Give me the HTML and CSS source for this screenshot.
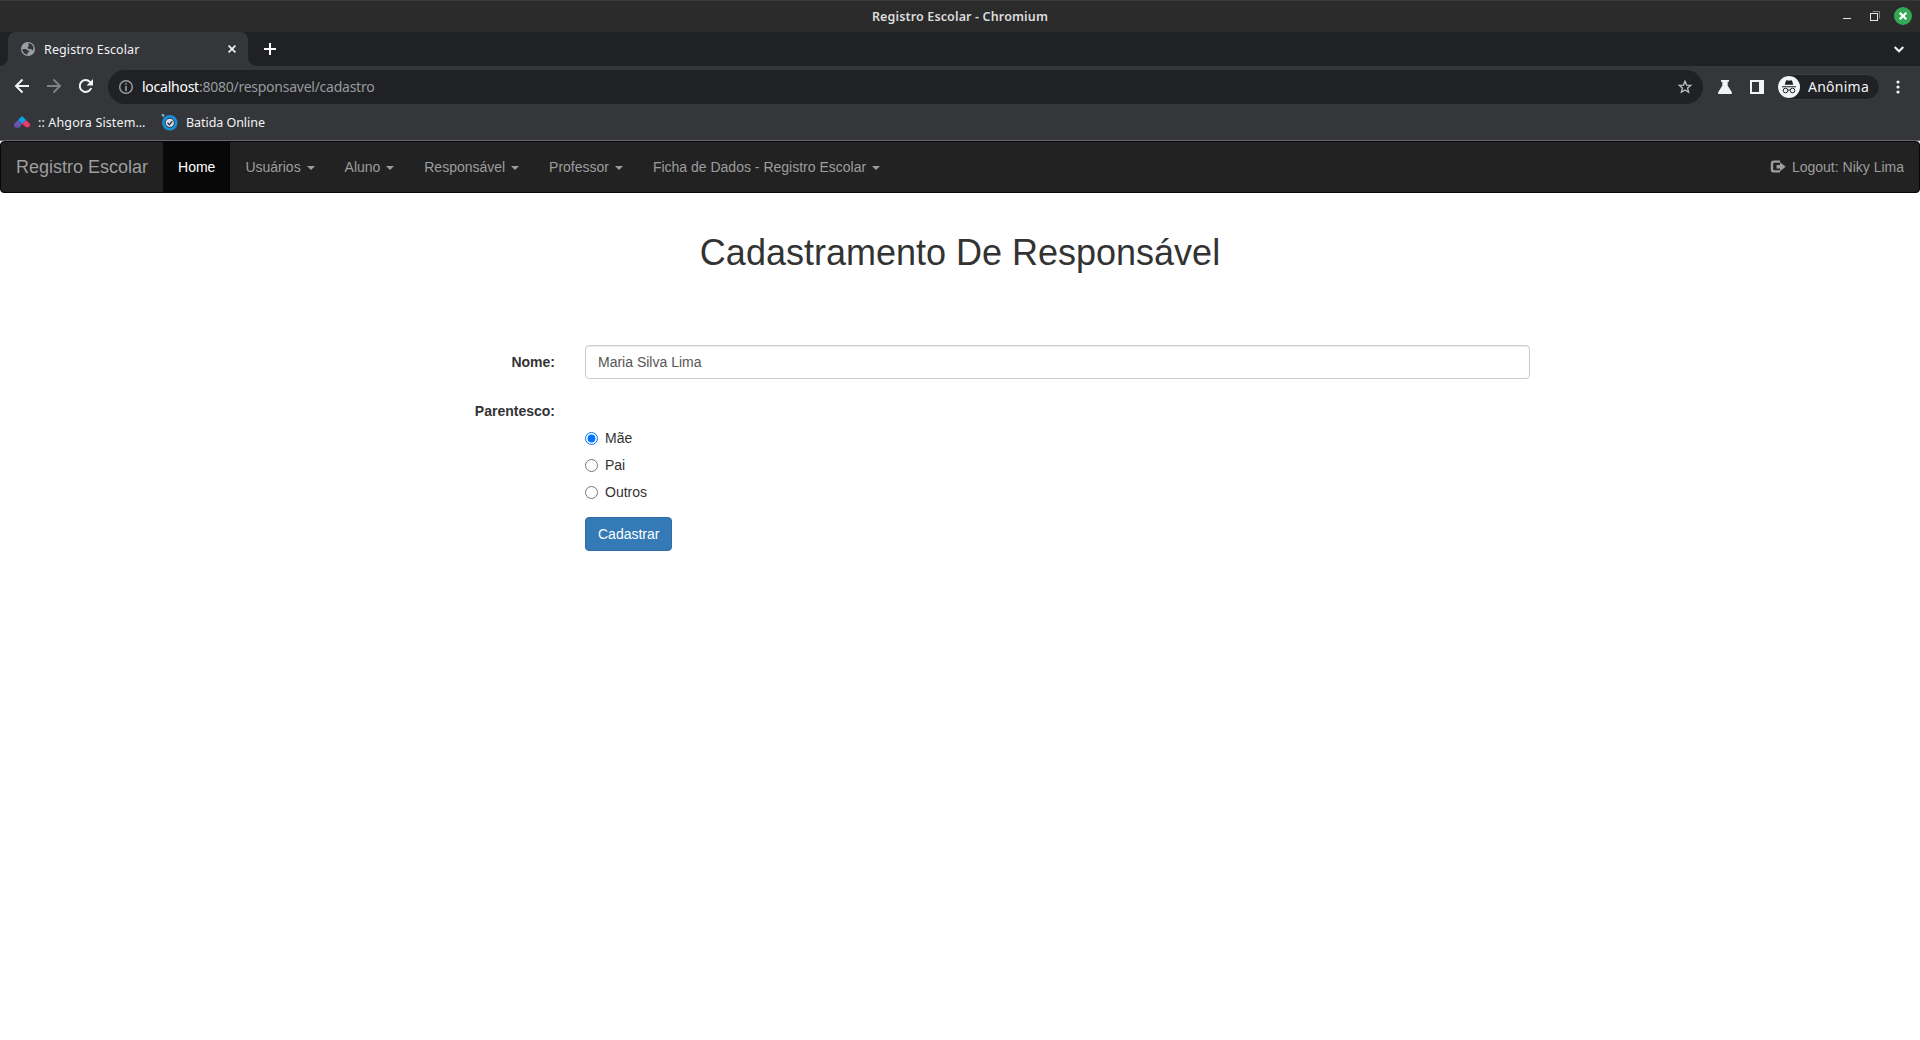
FILE: index.html
```html
<!DOCTYPE html>
<html lang="pt-BR">
<head>
<meta charset="utf-8">
<title>Registro Escolar</title>
<link rel="stylesheet" href="styles.css">
</head>
<body>
<div class="browser">
  <header class="titlebar">
    <span class="title-text">Registro Escolar - Chromium</span>
    <svg class="window-controls" width="80" height="32" viewBox="0 0 80 32">
      <path d="M3 18.5h8" stroke="#e4e4e4" fill="none"/>
      <path d="M32.5 11.500h7v7" stroke="#858585" fill="none"/>
      <rect x="30.500" y="13.500" width="7" height="7" stroke="#e4e4e4" fill="none"/>
      <circle cx="63" cy="16" r="9" fill="#35a854"/>
      <path d="M59.700 12.700l6.600 6.600M66.300 12.700l-6.600 6.600" stroke="#fff" stroke-width="2.200"/>
    </svg>
  </header>
  <div class="tabstrip">
    <div class="tab">
      <svg class="globe" width="14" height="14" viewBox="0 0 14 14">
        <circle cx="7" cy="7" r="7" fill="#9aa0a6"/>
        <path d="M1.300 7h3.200q2 0 2 1.600h1.700v1.200L6.500 11v1.700Q1.700 12 1.300 7zM7.200 1.300q4 .2 5.200 3.700l-.1 3-1.300.2-.7-1.300H7.600L6.500 5.600l1.200-1.500z" fill="#35363a"/>
      </svg>
      <span class="tab-title">Registro Escolar</span>
      <svg class="tab-close" width="8" height="8" viewBox="0 0 8 8"><path d="M.6.600l6.800 6.800M7.400.600L.6 7.400" stroke="#f1f3f4" stroke-width="1.700"/></svg>
    </div>
    <svg class="new-tab" width="12" height="12" viewBox="0 0 12 12"><path d="M6 0v12M0 6h12" stroke="#fff" stroke-width="2"/></svg>
    <svg class="tab-search" width="10" height="7" viewBox="0 0 10 7"><path d="M.7 1l4.300 4.300L9.300 1" stroke="#f1f3f4" stroke-width="2" fill="none"/></svg>
  </div>
  <div class="toolbar">
    <svg class="nav-icons" width="94" height="34" viewBox="0 0 94 34">
      <path d="M29 16H16.500M22.500 9.500L16 16l6.500 6.500" stroke="#f1f3f4" stroke-width="2" fill="none"/>
      <path d="M47 16h12.500M53.500 9.500L60 16l-6.500 6.500" stroke="#808185" stroke-width="2" fill="none"/>
      <path d="M91.200 18a5.900 5.900 0 1 1-1.300-6.100l1.700 1.700" stroke="#f1f3f4" stroke-width="2" fill="none"/>
      <path d="M93 9v6.400h-6.400z" fill="#f1f3f4"/>
    </svg>
    <div class="omnibox">
      <svg width="14" height="14" viewBox="0 0 14 14"><circle cx="7" cy="7" r="6.300" stroke="#9aa0a6" stroke-width="1.400" fill="none"/><path d="M7 3.200v1.600M7 6v5" stroke="#9aa0a6" stroke-width="1.600"/></svg>
      <span class="url"><b>localhost</b>:8080/responsavel/cadastro</span>
      <svg class="star" width="16" height="16" viewBox="0 0 16 16"><path d="M8 2.200l1.600 3.900 4.200.3-3.200 2.700 1 4.100L8 11l-3.600 2.200 1-4.100-3.200-2.700 4.200-.3z" stroke="#c3c5c8" stroke-width="1.300" fill="none"/></svg>
    </div>
    <svg class="extras" width="48" height="16" viewBox="0 0 48 16">
      <path d="M4 1h8v1.700h-1.300v4l4.200 6.500Q15.500 15 14 15H2Q.5 15 1.100 13.200l4.200-6.500v-4H4z" fill="#f1f3f4"/>
      <path d="M33 1h14v14H33zM35 3v10h7V3z" fill="#f1f3f4" fill-rule="evenodd"/>
    </svg>
    <div class="profile">
      <svg width="22" height="22" viewBox="0 0 22 22">
        <circle cx="11" cy="11" r="11" fill="#f1f3f4"/>
        <path d="M6.700 8.800L8 4.700q.3-.7 1-.4l2 .5 2-.5q.7-.3 1 .4l1.300 4.100zM4 10.300h14v1H4z" fill="#202124"/>
        <circle cx="7.500" cy="14.500" r="2.300" fill="none" stroke="#202124"/><circle cx="14.500" cy="14.500" r="2.300" fill="none" stroke="#202124"/>
        <path d="M9.800 14.200q1.200-.7 2.400 0" stroke="#202124" fill="none"/>
      </svg>
      <span>Anônima</span>
    </div>
    <svg class="menu" width="4" height="14" viewBox="0 0 4 14"><circle cx="2" cy="2" r="1.600" fill="#f1f3f4"/><circle cx="2" cy="7" r="1.600" fill="#f1f3f4"/><circle cx="2" cy="12" r="1.600" fill="#f1f3f4"/></svg>
  </div>
  <div class="bookmarks">
    <svg class="ahgora" width="16" height="12" viewBox="0 0 16 12">
      <path d="M4 4L8 0l4 4-4 4z" fill="#08a5e5"/>
      <path d="M4 4l4 4-2.500 3.500Q3 12.500 0 10.500V8z" fill="#6655a8"/>
      <path d="M12 4l4 4v1.500q-1 2.500-3.500 2L8 8z" fill="#ec386c"/>
    </svg>
    <span class="bookmark-ahgora">:: Ahgora Sistem…</span>
    <svg class="batida" width="17" height="17" viewBox="0 0 17 17">
      <circle cx="8.800" cy="8.800" r="7.700" fill="#188fd9"/>
      <circle cx="8.800" cy="8.800" r="4.600" fill="#d7dde5" stroke="#26384f" stroke-width="1"/>
      <path d="M6.500 8.700l1.900 2 3-3.600" stroke="#26384f" stroke-width="1.400" fill="none"/>
      <path d="M.3 0l3.500.8L2 3.300z" fill="#9dcbf5"/>
    </svg>
    <span class="bookmark-batida">Batida Online</span>
  </div>
</div>

<nav class="navbar">
  <a class="brand">Registro Escolar</a>
  <ul class="nav">
    <li class="active">Home</li>
    <li>Usuários <i class="caret"></i></li>
    <li>Aluno <i class="caret"></i></li>
    <li>Responsável <i class="caret"></i></li>
    <li>Professor <i class="caret"></i></li>
    <li>Ficha de Dados - Registro Escolar <i class="caret"></i></li>
  </ul>
  <div class="logout">
    <svg width="16" height="14" viewBox="0 0 16 14"><path d="M10 1.600H4Q2 1.600 2 3.600v5.800q0 2 2 2h6" stroke="#9d9d9d" stroke-width="2.400" fill="none"/><path d="M6.500 5H10V2.300l5.700 4.400-5.700 4.500V8.500H6.500z" fill="#9d9d9d"/></svg>
    <span>Logout: Niky Lima</span>
  </div>
</nav>

<main class="container">
  <h1>Cadastramento De Responsável</h1>
  <form class="form">
    <label class="label" for="nome">Nome:</label>
    <input class="control" id="nome" type="text" value="Maria Silva Lima">
    <span class="label">Parentesco:</span>
    <div class="options">
      <label class="radio"><input type="radio" name="parentesco" checked>Mãe</label>
      <label class="radio"><input type="radio" name="parentesco">Pai</label>
      <label class="radio"><input type="radio" name="parentesco">Outros</label>
    </div>
    <button class="submit" type="button">Cadastrar</button>
  </form>
</main>
</body>
</html>
```

FILE: styles.css
```css
* { box-sizing: border-box; }
body {
  margin: 0;
  height: 1040px;
  overflow: hidden;
  background: #fff;
  color: #333;
  font: 14px/20px "Liberation Sans", Arial, sans-serif;
}
svg { display: block; flex: none; }

.browser {
  height: 141px;
  background: #35363a;
  border-bottom: 1px solid #67686b;
  color: #f1f3f4;
  font-family: "Noto Sans", "Open Sans", sans-serif;
  white-space: nowrap;
}
.titlebar {
  display: grid;
  grid-template-columns: 80px 1fr 80px;
  height: 32px;
  align-items: center;
  background: #2b2b2b;
  border-top: 1px solid #3a3a3a;
}
.title-text {
  grid-column: 2;
  text-align: center;
  color: #dcdcdc;
  font-size: 12.5px;
  font-weight: 600;
  letter-spacing: .14px;
}
.window-controls { margin-top: -1px; }

.tabstrip {
  display: flex;
  align-items: center;
  height: 34px;
  padding: 0 14px 0 8px;
  background: #202124;
}
.tab {
  position: relative;
  display: flex;
  align-items: center;
  width: 240px;
  height: 34px;
  padding: 0 12px 0 13px;
  border-radius: 8px 8px 0 0;
  background: #35363a;
}
.tab::before, .tab::after {
  content: "";
  position: absolute;
  bottom: 0;
  width: 8px;
  height: 8px;
}
.tab::before { left: -8px; background: radial-gradient(circle at 0 0, transparent 7.5px, #35363a 8px); }
.tab::after { right: -8px; background: radial-gradient(circle at 100% 0, transparent 7.5px, #35363a 8px); }
.tab-title { flex: 1; margin-left: 9px; padding-top: 1px; font-size: 12.5px; letter-spacing: .1px; }
.new-tab { margin-left: 16px; }
.tab-search { margin: 1px 2px 0 auto; }

.toolbar {
  display: flex;
  align-items: center;
  height: 42px;
  padding-right: 20px;
}
.omnibox {
  display: flex;
  align-items: center;
  width: 1595px;
  height: 34px;
  margin-left: 14px;
  padding: 0 10px 0 11px;
  border-radius: 17px;
  background: #202124;
}
.url { flex: 1; margin-left: 9px; font-size: 14px; letter-spacing: -.25px; color: #969a9f; }
.url b { font-weight: 400; color: #fff; }
.extras { margin-left: 14px; }
.profile {
  display: flex;
  align-items: center;
  width: 103px;
  height: 26px;
  margin-left: 12px;
  border: 1px solid #3c3d41;
  border-radius: 13px;
  background: #202124;
  font-size: 14px;
  letter-spacing: .25px;
}
.profile span { margin-left: 8px; }
.menu { margin-left: auto; }

.bookmarks {
  display: flex;
  align-items: center;
  height: 28px;
  padding-left: 14px;
  font-size: 12.5px;
}
.bookmark-ahgora { width: 107px; margin-left: 8px; padding-top: 1px; letter-spacing: .13px; }
.batida { margin-left: 16px; }
.bookmark-batida { margin-left: 8px; padding-top: 1px; letter-spacing: -.05px; }

.navbar {
  display: flex;
  height: 52px;
  border: 1px solid #080808;
  border-radius: 4px;
  background: #222;
  color: #9d9d9d;
}
.brand { padding: 15px; font-size: 18px; }
.nav { display: flex; margin: 0; padding: 0; list-style: none; }
.nav li { padding: 15px; }
.nav .active { background: #080808; color: #fff; }
.caret {
  display: inline-block;
  margin-left: 2px;
  vertical-align: middle;
  border-top: 4px solid;
  border-right: 4px solid transparent;
  border-left: 4px solid transparent;
}
.logout { display: flex; align-items: center; gap: 6px; margin-left: auto; padding: 0 15px; }

.container { width: 1170px; margin: 0 auto; padding: 40px 15px 0; }
h1 { margin: 0; font-size: 36px; font-weight: 500; line-height: 39.6px; text-align: center; }
.form {
  display: grid;
  grid-template-columns: 165px 945px;
  column-gap: 30px;
  row-gap: 15px;
  margin-top: 72.4px;
}
.label { padding-top: 7px; font-weight: 700; text-align: right; }
.control {
  height: 34px;
  padding: 6px 12px;
  border: 1px solid #ccc;
  border-radius: 4px;
  background: #fff;
  box-shadow: inset 0 1px 1px rgba(0, 0, 0, .075);
  color: #555;
  font: inherit;
}
.options { padding-top: 27px; }
.radio { display: flex; height: 27px; padding-top: 7px; }
.radio input { width: 13px; height: 13px; margin: 4px 7px 0 0; }
.submit {
  grid-column: 2;
  justify-self: start;
  height: 34px;
  padding: 6px 12px;
  border: 1px solid #2e6da4;
  border-radius: 4px;
  background: #337ab7;
  color: #fff;
  font: inherit;
}
```
